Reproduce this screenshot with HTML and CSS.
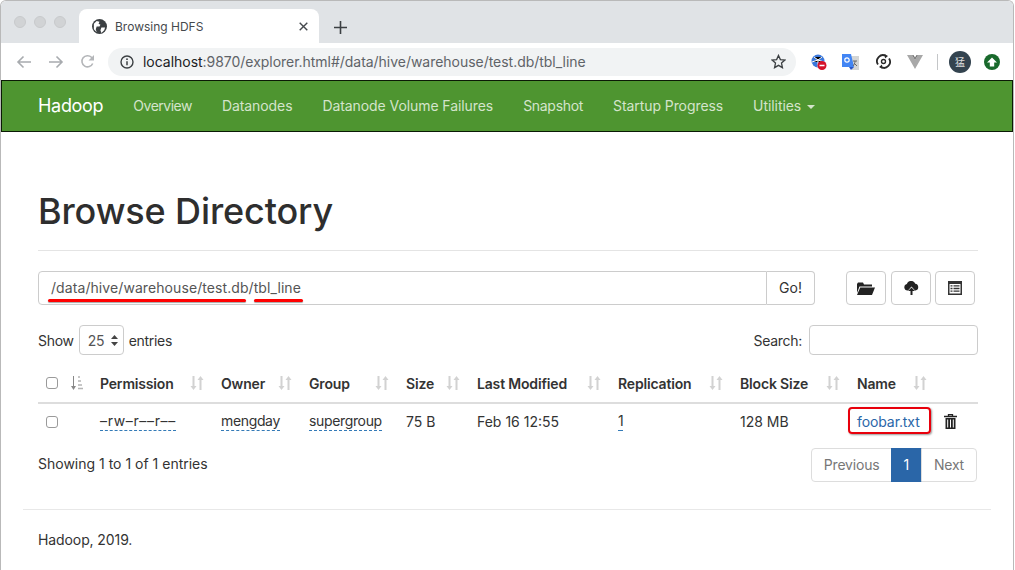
FILE: index.html
```html
<!DOCTYPE html>
<html lang="en">
<head>
<meta charset="utf-8">
<title>Browsing HDFS</title>
<link rel="stylesheet" href="styles.css">
</head>
<body>
<svg class="defs" width="0" height="0"><symbol id="sort" viewBox="0 0 14 14"><path d="M4.500 0v10h2L3.500 14 .5 10h2V0zM11.500 14V4h2L10.500 0 7.500 4h2v10z" fill="#d2d2d2"/></symbol></svg>
<div class="window">
  <div class="tabstrip">
    <div class="lights"><i></i><i></i><i></i></div>
    <div class="tab">
      <svg class="globe" width="15" height="15" viewBox="0 0 16 16"><circle cx="8" cy="8" r="8" fill="#3c4043"/><path d="M2 5l3-3 3 1-1 2 2 1-1 2-3 0-1 3 1 3-3-3zM10 9h4l-1 3-3 3-1-3z" fill="#fff"/></svg>
      <span class="tab-title">Browsing HDFS</span>
      <svg class="tab-x" width="9" height="9" viewBox="0 0 9 9"><path d="M.7.7l7.6 7.6M8.300.7L.7 8.300" stroke="#45494d" stroke-width="1.400"/></svg>
    </div>
    <svg class="newtab" width="13" height="13" viewBox="0 0 13 13"><path d="M6.500 0v13M0 6.500h13" stroke="#3c4043" stroke-width="1.600"/></svg>
  </div>
  <div class="toolbar">
    <svg class="nav-ic" width="16" height="14" viewBox="0 0 16 14"><path d="M15 7H2M7.500 1.500L2 7l5.500 5.500" fill="none" stroke="#a8abaf" stroke-width="1.600"/></svg>
    <svg class="nav-ic" width="16" height="14" viewBox="0 0 16 14"><path d="M1 7h13M8.500 1.500L14 7l-5.500 5.500" fill="none" stroke="#a8abaf" stroke-width="1.600"/></svg>
    <svg class="nav-ic" width="15" height="15" viewBox="0 0 15 15"><path d="M12.700 9.500A5.600 5.600 0 1 1 11.500 3.300L13.500 5.300" fill="none" stroke="#b4b6b9" stroke-width="1.600"/><path d="M14 1v5.500H8.500z" fill="#b4b6b9"/></svg>
    <div class="omnibox">
      <svg width="14" height="14" viewBox="0 0 14 14"><circle cx="7" cy="7" r="6" fill="none" stroke="#3c4043" stroke-width="1.400"/><path d="M7 6.200v4" stroke="#3c4043" stroke-width="1.500"/><circle cx="7" cy="4.200" r=".9" fill="#3c4043"/></svg>
      <span class="url"><b>localhost</b>:9870/explorer.html#/data/hive/warehouse/test.db/tbl_line</span>
      <svg class="star" width="15" height="15" viewBox="0 0 16 16"><path d="M8 1.500l2 4.500 4.800.5-3.600 3.200 1 4.800L8 12.100l-4.200 2.400 1-4.800L1.200 6.500 6 6z" fill="none" stroke="#3c4043" stroke-width="1.400"/></svg>
    </div>
    <div class="extensions">
      <svg class="ext-adblock" width="16" height="16" viewBox="0 0 16 16"><circle cx="7" cy="7" r="6.500" fill="#3b78dc"/><path d="M3 3l4 3 4-3M7 6v7M1 8l6-2 6 2" stroke="#fff" stroke-width="1"/><circle cx="11" cy="11.500" r="4.500" fill="#d5112a"/><path d="M8.500 11.500h5" stroke="#fff" stroke-width="1.500"/></svg>
      <svg class="ext-translate" width="17" height="16" viewBox="0 0 17 16"><path d="M7 2h10v14H10z" fill="#d3d5d5"/><path d="M0 0h9l3 13H0z" fill="#4285f4"/><path d="M7 13h5l-3 3z" fill="#2a56c6"/><circle cx="5" cy="6" r="2.200" fill="none" stroke="#fff" stroke-width="1.200"/><path d="M11 7h4M13 7c0 2-1 4-2 5M12 9l3 3" stroke="#666" fill="none"/></svg>
      <svg class="ext-sync" width="15" height="15" viewBox="0 0 15 15"><path d="M2 10.500A6 6 0 0 1 10 2M13 4.500A6 6 0 0 1 5 13" fill="none" stroke="#2b2b2b" stroke-width="1.800"/><path d="M8.500 0l3.500 2-3 2.500zM6.500 15L3 13l3-2.500z" fill="#2b2b2b"/><circle cx="7.500" cy="7.500" r="2" fill="none" stroke="#2b2b2b" stroke-width="1.400"/></svg>
      <svg class="ext-vue" width="16" height="14" viewBox="0 0 16 14"><path d="M0 0h5l3 5 3-5h5L8 14z" fill="#a8a8a8"/><path d="M5 0l3 5 3-5h-1.500L8 2.500 6.500 0z" fill="#777"/></svg>
      <span class="sep"></span>
      <span class="avatar">猛</span>
      <span class="update"><svg width="10" height="10" viewBox="0 0 10 10"><path d="M5 .5L10 5.500H7.200V9.500H2.800V5.500H0z" fill="#fff"/></svg></span>
    </div>
  </div>
  <nav class="navbar">
    <a class="brand">Hadoop</a>
    <a class="tight">Overview</a><a>Datanodes</a><a>Datanode Volume Failures</a><a class="tight-s">Snapshot</a><a>Startup Progress</a>
    <a>Utilities <i class="caret"></i></a>
  </nav>
  <main class="container">
    <h1>Browse Directory</h1>
    <div class="path-row">
      <div class="input-group">
        <div class="path-input">/data/hive/warehouse/test.db/tbl_line<i class="mark mark-a"></i><i class="mark mark-b"></i></div>
        <div class="go">Go!</div>
      </div>
      <div class="tools">
        <div class="tool"><svg width="18" height="14" viewBox="0 0 18 14"><path d="M0 3V12L2.500 5.500H15V3.500H7L6 1.500H1z" fill="#222"/><path d="M3.200 6.500H18L15 14H0z" fill="#222"/></svg></div>
        <div class="tool"><svg width="15" height="14" viewBox="0 0 15 14"><path d="M4 9.500H3.500A3.300 3.300 0 0 1 2.800 3 4.500 4.500 0 0 1 11.300 2.800 3.400 3.400 0 0 1 11.500 9.500H11L7.500 5.500z" fill="#222"/><path d="M7.500 6.500L11 10H8.500V14H6.500V10H4z" fill="#222"/></svg></div>
        <div class="tool"><svg width="14" height="14" viewBox="0 0 14 14"><path d="M0 0h14v14H0z" fill="#333"/><path d="M1.500 3h11v9.500h-11z" fill="#fff"/><path d="M2.500 4.200h2v1.400h-2zM5.500 4.200h6v1.400h-6zM2.500 6.800h2v1.400h-2zM5.500 6.800h6v1.400h-6zM2.500 9.400h2v1.400h-2zM5.500 9.400h6v1.400h-6z" fill="#333"/></svg></div>
      </div>
    </div>
    <div class="filters">
      <label class="length">Show <span class="select">25<svg width="7" height="11" viewBox="0 0 7 11"><path d="M3.500 0L7 4H0zM3.500 11L0 7h7z" fill="#444"/></svg></span> entries</label>
      <label class="search">Search: <span class="search-box"></span></label>
    </div>
    <table>
      <thead>
        <tr>
          <th class="c-check"><i class="checkbox"></i></th>
          <th class="c-sort"><svg class="sorted" width="14" height="14" viewBox="0 0 14 14"><path d="M4 0v10h2L3.500 14 1 10h2V0z" fill="#888"/><path d="M8 1h2M8 5h3M8 9h4M8 12.500h5" stroke="#b5b5b5" stroke-width="1.500"/></svg></th>
          <th class="c-perm">Permission<svg class="sort"><use href="#sort"/></svg></th>
          <th class="c-owner">Owner<svg class="sort"><use href="#sort"/></svg></th>
          <th class="c-group">Group<svg class="sort"><use href="#sort"/></svg></th>
          <th class="c-size">Size<svg class="sort"><use href="#sort"/></svg></th>
          <th class="c-mod">Last Modified<svg class="sort"><use href="#sort"/></svg></th>
          <th class="c-rep">Replication<svg class="sort"><use href="#sort"/></svg></th>
          <th class="c-block">Block Size<svg class="sort"><use href="#sort"/></svg></th>
          <th class="c-name">Name<svg class="sort"><use href="#sort"/></svg></th>
          <th class="c-del"></th>
        </tr>
      </thead>
      <tbody>
        <tr>
          <td><i class="checkbox"></i></td>
          <td></td>
          <td><span class="editable perm">–rw–r––r––</span></td>
          <td><span class="editable">mengday</span></td>
          <td><span class="editable">supergroup</span></td>
          <td>75 B</td>
          <td>Feb 16 12:55</td>
          <td><span class="editable">1</span></td>
          <td>128 MB</td>
          <td><a class="file">foobar.txt<i class="ring"></i></a></td>
          <td><svg class="trash" width="13" height="15" viewBox="0 0 13 15"><path d="M4.500 2V.6h4V2M0 2.500h13" fill="none" stroke="#222" stroke-width="1.300"/><path d="M1.500 4h10v11h-10z" fill="#222"/><path d="M3.700 5.500v8M6.500 5.500v8M9.300 5.500v8" stroke="#fff"/></svg></td>
        </tr>
      </tbody>
    </table>
    <div class="table-foot">
      <span class="info">Showing 1 to 1 of 1 entries</span>
      <div class="pager"><span class="page">Previous</span><span class="page current">1</span><span class="page">Next</span></div>
    </div>
  </main>
  <footer class="footer">Hadoop, 2019.</footer>
</div>
</body>
</html>
```
FILE: styles.css
```css
* { box-sizing: border-box; }
html, body { margin: 0; padding: 0; }
body { width: 1015px; height: 570px; overflow: hidden; background: #fff; font-family: Inter, "Liberation Sans", sans-serif; font-size: 14px; color: #333; }
.defs { position: absolute; }
.window { width: 1014px; height: 570px; border: 1px solid #b9b9b9; border-bottom: 0; border-radius: 6px 6px 0 0; overflow: hidden; }
.tabstrip { height: 42px; background: #e0e3e6; display: flex; align-items: flex-end; padding-left: 78px; position: relative; }
.lights { position: absolute; left: 13px; top: 15px; display: flex; gap: 8px; }
.lights i { width: 12px; height: 12px; border-radius: 50%; background: #d1d3d5; border: 1px solid #c8cacc; }
.tab { width: 240px; height: 34px; background: #fff; border-radius: 8px 8px 0 0; display: flex; align-items: center; padding: 0 11px 0 13px; font-size: 12px; color: #45494d; }
.tab-title { margin-left: 8px; flex: 1; }
.newtab { margin: 0 0 9px 15px; }
.toolbar { height: 37px; background: #fff; display: flex; align-items: center; padding-left: 15px; }
.nav-ic { margin-right: 16px; flex: none; }
.nav-ic:nth-child(3) { margin-right: 13px; }
.omnibox { width: 688px; height: 28px; border-radius: 14px; background: #f1f3f4; display: flex; align-items: center; padding: 0 10px 0 12px; }
.url { margin-left: 9px; flex: 1; font-size: 14px; letter-spacing: -.03px; color: #5f6368; white-space: nowrap; }
.url b { font-weight: 400; color: #202124; }
.extensions { display: flex; align-items: center; margin-left: 15px; }
.ext-translate { margin-left: 15px; }
.ext-sync { margin-left: 17px; }
.ext-vue { margin-left: 16px; }
.sep { width: 1px; height: 16px; background: #c4c6c8; margin: 0 11px 0 14px; }
.avatar { width: 22px; height: 22px; border-radius: 50%; background: #33434f; color: #ddd; font: 10px "Noto Sans CJK SC", sans-serif; display: flex; align-items: center; justify-content: center; }
.update { width: 16px; height: 16px; border-radius: 50%; background: #19692c; margin-left: 13px; display: flex; align-items: center; justify-content: center; }
.navbar { height: 52px; background: #4e9530; border: 1px solid #0b1a05; display: flex; align-items: center; padding: 0 0 2px 36px; color: #d4e4cb; letter-spacing: -.08px; }
.navbar a { margin-right: 30px; white-space: nowrap; }
.navbar .brand { font-size: 18px; color: #fff; letter-spacing: -.3px; }
.navbar .tight { letter-spacing: -.5px; }
.navbar .tight-s { letter-spacing: -.3px; }
.caret { display: inline-block; margin-left: 2px; vertical-align: middle; border-top: 4px solid #d4e4cb; border-left: 4px solid transparent; border-right: 4px solid transparent; }
.container { padding: 0 35px 0 37px; }
h1 { margin: 0; padding: 59px 0 19px; font-size: 36px; line-height: 40px; font-weight: 500; letter-spacing: -.13px; color: #2e2e2e; border-bottom: 1px solid #e4e4e4; }
.path-row { display: flex; justify-content: space-between; margin-top: 20px; padding-right: 3px; }
.input-group { width: 777px; height: 34px; display: flex; }
.path-input { position: relative; flex: 1; border: 1px solid #ccc; border-radius: 4px 0 0 4px; padding: 0 12px; line-height: 32px; letter-spacing: .08px; color: #555; }
.go { width: 48px; border: 1px solid #ccc; border-left: 0; border-radius: 0 4px 4px 0; text-align: center; line-height: 32px; }
.mark { position: absolute; height: 3px; top: 27px; background: #f00; border-radius: 2px; box-shadow: 0 1px 1px rgba(0,0,0,.35); }
.mark-a { left: 9px; width: 198px; }
.mark-b { left: 215px; width: 49px; }
.tools { display: flex; gap: 5px; }
.tool { width: 40px; height: 34px; border: 1px solid #ccc; border-radius: 4px; display: flex; align-items: center; justify-content: center; }
.tool:last-child { margin-left: -1px; }
.filters { display: flex; justify-content: space-between; align-items: center; margin-top: 20px; height: 30px; }
.length, .search { display: flex; align-items: center; gap: 5px; letter-spacing: -.3px; }
.search { gap: 7px; }
.select { width: 45px; height: 30px; border: 1px solid #ccc; border-radius: 4px; display: flex; align-items: center; justify-content: space-between; padding: 0 5px 0 8px; color: #555; }
.search-box { width: 169px; height: 30px; border: 1px solid #ccc; border-radius: 4px; }
table { width: 100%; margin-top: 9px; border-collapse: collapse; table-layout: fixed; }
th { height: 39px; padding: 0; text-align: left; font-weight: 600; letter-spacing: -.17px; border-bottom: 2px solid #ddd; position: relative; }
td { height: 38px; padding: 0 0 2px; }
.c-check { width: 29px; } .c-sort { width: 33px; } .c-perm { width: 121px; } .c-owner { width: 88px; } .c-group { width: 97px; }
.c-size { width: 71px; } .c-mod { width: 141px; } .c-rep { width: 122px; } .c-block { width: 117px; } .c-name { width: 83px; } .c-del { width: 38px; }
.checkbox { display: block; width: 12px; height: 12px; margin-left: 8px; border: 1px solid #9a9a9a; border-radius: 3px; background: #fff; }
.sorted { display: block; margin-left: 3px; }
.sort { position: absolute; right: 17px; top: 12px; width: 14px; height: 14px; }
.c-name .sort { right: 13px; }
.editable { border-bottom: 1px dashed #337ab7; display: inline-block; line-height: 18px; letter-spacing: -.35px; }
.editable.perm { letter-spacing: .65px; }
.file { position: relative; color: #2a66a8; letter-spacing: -.1px; }
.ring { position: absolute; left: -9px; top: -6px; width: 83px; height: 27px; border: 2px solid #e8000c; border-radius: 4px; box-shadow: 1px 1px 2px rgba(0,0,0,.4); }
.trash { display: block; margin-left: 4px; }
.table-foot { display: flex; justify-content: space-between; align-items: flex-start; margin-top: 7px; }
.info { margin-top: 7px; }
.pager { display: flex; height: 34px; margin-right: 1px; letter-spacing: -.2px; }
.page { padding: 0 12px; border: 1px solid #ddd; margin-left: -1px; line-height: 32px; color: #777; }
.page:first-child { border-radius: 4px 0 0 4px; }
.page:last-child { border-radius: 0 4px 4px 0; }
.page.current { background: #2a66a8; border-color: #2a66a8; color: #fff; padding: 0 12px 0 11px; }
.footer { margin: 27px 22px 0; border-top: 1px solid #e8e8e8; padding: 21px 15px 0; letter-spacing: -.1px; }
```
